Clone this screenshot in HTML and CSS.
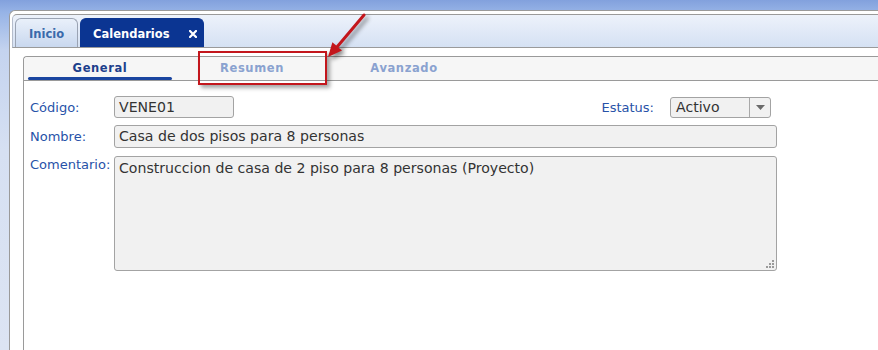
FILE: index.html
```html
<!DOCTYPE html>
<html lang="es">
<head>
  <meta charset="UTF-8">
  <meta name="viewport" content="width=device-width, initial-scale=1">
  <title>Calendarios</title>
  <link rel="stylesheet" href="styles.css">
</head>
<body>
<div class="ventana">
  <div class="pestanas">
    <div class="pestana">Inicio</div>
    <div class="pestana activa">Calendarios
      <svg class="cerrar" width="8" height="8" viewBox="0 0 8 8"><path d="M1 1L7 7M7 1L1 7" stroke="#fff" stroke-width="2.2" stroke-linecap="square"/></svg>
    </div>
  </div>

  <div class="cuerpo">
    <div class="panel">
      <div class="subpestanas">
        <div class="sub activa">General</div>
        <div class="sub">Resumen</div>
        <div class="sub">Avanzado</div>
      </div>

      <div class="formulario">
        <div class="fila">
          <label>Código:</label>
          <div class="campo corto">VENE01</div>
          <label class="derecha">Estatus:</label>
          <div class="combo">
            <span class="valor">Activo</span>
            <span class="boton"><svg width="9" height="5" viewBox="0 0 9 5"><path d="M0 0H9L4.5 5Z" fill="#6a6a6a"/></svg></span>
          </div>
        </div>
        <div class="fila">
          <label>Nombre:</label>
          <div class="campo largo">Casa de dos pisos para 8 personas</div>
        </div>
        <div class="fila">
          <label>Comentario:</label>
          <div class="campo largo texto">Construccion de casa de 2 piso para 8 personas (Proyecto)
            <svg class="agarre" width="9" height="9" viewBox="0 0 9 9" fill="#9a9a9a">
              <rect x="7" y="1" width="2" height="2"/>
              <rect x="4" y="4" width="2" height="2"/><rect x="7" y="4" width="2" height="2"/>
              <rect x="1" y="7" width="2" height="2"/><rect x="4" y="7" width="2" height="2"/><rect x="7" y="7" width="2" height="2"/>
            </svg>
          </div>
        </div>
      </div>
    </div>
  </div>
</div>

<!-- anotacion -->
<div class="marca"></div>
<svg class="flecha" width="878" height="100" viewBox="0 0 878 100">
  <g style="filter: drop-shadow(3px 3px 2px rgba(0,0,0,0.45))">
    <line x1="364" y1="15" x2="337" y2="47" stroke="#c3161c" stroke-width="3" stroke-linecap="round"/>
    <path d="M328 57L332.4 42.3L342 50.6Z" fill="#c3161c"/>
  </g>
</svg>
</body>
</html>
```

FILE: styles.css
```css
body {
  margin: 0;
  height: 350px;
  overflow: hidden;
  font-family: "DejaVu Sans", Verdana, sans-serif;
  background: linear-gradient(#82a1dd 0, #96b3e6 12px, #c4d3ef 50px, #d6e0f2 150px, #dce4f3 350px);
}
.ventana {
  margin: 10px 0 0 9px;
  height: 340px;
  box-sizing: border-box;
  overflow: hidden;
  border: 1px solid #9a9a9a;
  border-right: none;
  border-bottom: none;
  border-radius: 6px 0 0 0;
  background: #fff;
  padding-top: 3px;
}
.pestanas {
  margin-left: 2px;
  height: 32px;
  padding-left: 2px;
  display: flex;
  align-items: flex-end;
  gap: 2px;
  border-top: 1px solid #9a9a9a;
  border-bottom: 1px solid #9a9a9a;
  border-left: 1px solid #b4bccb;
  border-radius: 5px 0 0 0;
  background: linear-gradient(#edf2fb, #d5e1f3);
}
.pestana {
  height: 29px;
  box-sizing: border-box;
  display: flex;
  align-items: center;
  padding: 1px 13px 0 13px;
  border: 1px solid #9aa3b3;
  border-bottom: none;
  border-radius: 6px 6px 0 0;
  background: linear-gradient(#e9f0fa, #c9d8ef);
  color: #3a6aab;
  font-weight: bold;
  font-size: 11.5px;
}
.pestana.activa {
  border-color: #0b3592;
  background: #0b3592;
  color: #fff;
  padding: 1px 6px 0 12px;
}
.cerrar {
  margin-left: 19px;
}
.cuerpo {
  padding: 8px 0 0 13px;
}
.panel {
  border: 1px solid #9a9a9a;
  border-right: none;
  border-bottom: none;
  border-radius: 4px 0 0 0;
  height: 300px;
}
.subpestanas {
  height: 23px;
  display: flex;
  gap: 8px;
  padding-left: 4px;
  background: #f6f6f6;
  border-bottom: 1px solid #9a9a9a;
  border-radius: 4px 0 0 0;
}
.sub {
  width: 144px;
  position: relative;
  text-align: center;
  font-size: 11.5px;
  font-weight: bold;
  letter-spacing: 0.6px;
  line-height: 22px;
  color: #8aa2d0;
}
.sub.activa {
  color: #1d3f8c;
}
.sub.activa::after {
  content: "";
  position: absolute;
  left: 0;
  right: 0;
  bottom: 0;
  height: 3px;
  border-radius: 2px;
  background: #1a45a0;
}
.formulario {
  padding: 15px 0 0 6px;
  width: 747px;
}
.fila {
  display: flex;
  align-items: center;
  margin-bottom: 7px;
}
.fila:last-child {
  align-items: flex-start;
}
.fila label {
  width: 84px;
  font-size: 13px;
  color: #2752a8;
}
.fila:last-child label {
  padding-top: 1px;
}
.fila label.derecha {
  width: auto;
  margin-left: auto;
  margin-right: 16px;
}
.campo {
  height: 22px;
  box-sizing: border-box;
  border: 1px solid #a3a3a3;
  border-radius: 3px;
  background: #f1f1f1;
  padding: 0 4px;
  line-height: 20px;
  font-size: 14.1px;
  color: #333;
  white-space: nowrap;
}
.corto {
  width: 120px;
}
.largo {
  width: 663px;
}
.fila:nth-child(2) {
  margin-bottom: 8px;
}
.fila:nth-child(2) .campo {
  height: 23px;
}
.texto {
  height: 115px;
  position: relative;
  padding-top: 1px;
}
.agarre {
  position: absolute;
  right: 2px;
  bottom: 2px;
}
.combo {
  width: 101px;
  height: 21px;
  box-sizing: border-box;
  margin-right: 6px;
  display: flex;
  border: 1px solid #a3a3a3;
  border-radius: 3px;
  background: #f1f1f1;
  font-size: 14.1px;
  color: #333;
}
.combo .valor {
  flex: 1;
  padding-left: 5px;
  line-height: 19px;
}
.combo .boton {
  width: 20px;
  border-left: 1px solid #a8a8a8;
  display: flex;
  align-items: center;
  justify-content: center;
}
.marca {
  position: absolute;
  left: 198px;
  top: 51px;
  width: 125px;
  height: 30px;
  border: 2px solid #c3161c;
  box-shadow: 3px 3px 4px rgba(0,0,0,0.35);
}
.flecha {
  position: absolute;
  left: 0;
  top: 0;
}
```
